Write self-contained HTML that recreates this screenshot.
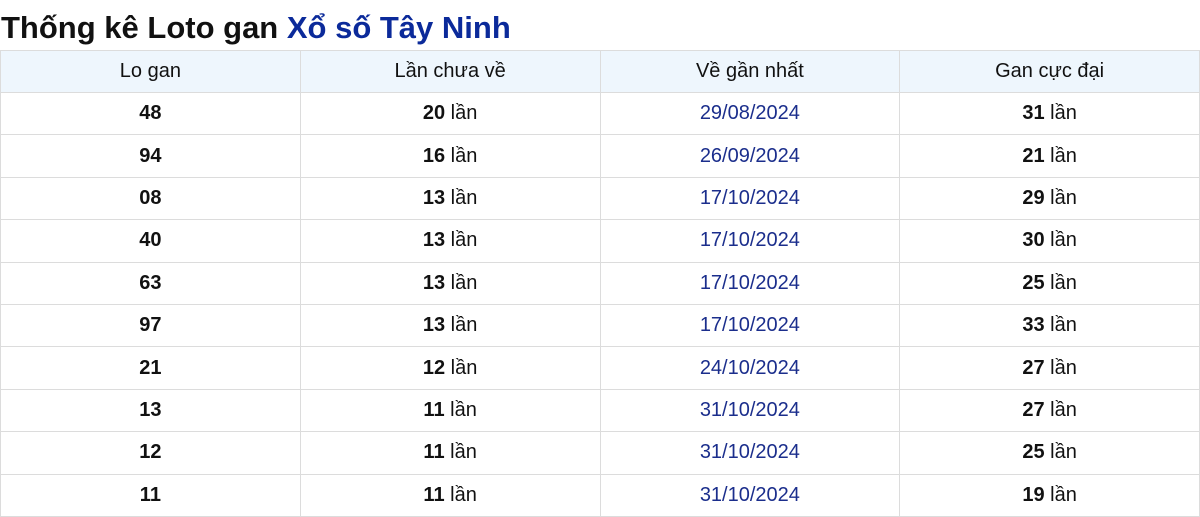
<!DOCTYPE html>
<html><head><meta charset="utf-8"><style>
body{margin:0;background:#fff;font-family:"Liberation Sans",Arial,sans-serif;width:1200px;height:517px;overflow:hidden}
h1{margin:0;height:50px;font-size:31px;font-weight:bold;line-height:56px;color:#111;padding-left:1px}
h1 span{color:#0b2a9a}
table{border-collapse:collapse;width:1200px;table-layout:fixed;font-size:20px}
td,th{border:1px solid #dcdcdc;text-align:center;padding:0;color:#111}
th{font-weight:normal;background:#eef6fd;height:41px}
td{height:41.4px}
td b{font-weight:bold}
td.d{color:#1b2e8c}
</style></head><body>
<h1>Thống kê Loto gan <span>Xổ số Tây Ninh</span></h1>
<table>
<tr><th>Lo gan</th><th>Lần chưa về</th><th>Về gần nhất</th><th>Gan cực đại</th></tr>
<tr><td><b>48</b></td><td><b>20</b> lần</td><td class="d">29/08/2024</td><td><b>31</b> lần</td></tr>
<tr><td><b>94</b></td><td><b>16</b> lần</td><td class="d">26/09/2024</td><td><b>21</b> lần</td></tr>
<tr><td><b>08</b></td><td><b>13</b> lần</td><td class="d">17/10/2024</td><td><b>29</b> lần</td></tr>
<tr><td><b>40</b></td><td><b>13</b> lần</td><td class="d">17/10/2024</td><td><b>30</b> lần</td></tr>
<tr><td><b>63</b></td><td><b>13</b> lần</td><td class="d">17/10/2024</td><td><b>25</b> lần</td></tr>
<tr><td><b>97</b></td><td><b>13</b> lần</td><td class="d">17/10/2024</td><td><b>33</b> lần</td></tr>
<tr><td><b>21</b></td><td><b>12</b> lần</td><td class="d">24/10/2024</td><td><b>27</b> lần</td></tr>
<tr><td><b>13</b></td><td><b>11</b> lần</td><td class="d">31/10/2024</td><td><b>27</b> lần</td></tr>
<tr><td><b>12</b></td><td><b>11</b> lần</td><td class="d">31/10/2024</td><td><b>25</b> lần</td></tr>
<tr><td><b>11</b></td><td><b>11</b> lần</td><td class="d">31/10/2024</td><td><b>19</b> lần</td></tr>
</table>
</body></html>
